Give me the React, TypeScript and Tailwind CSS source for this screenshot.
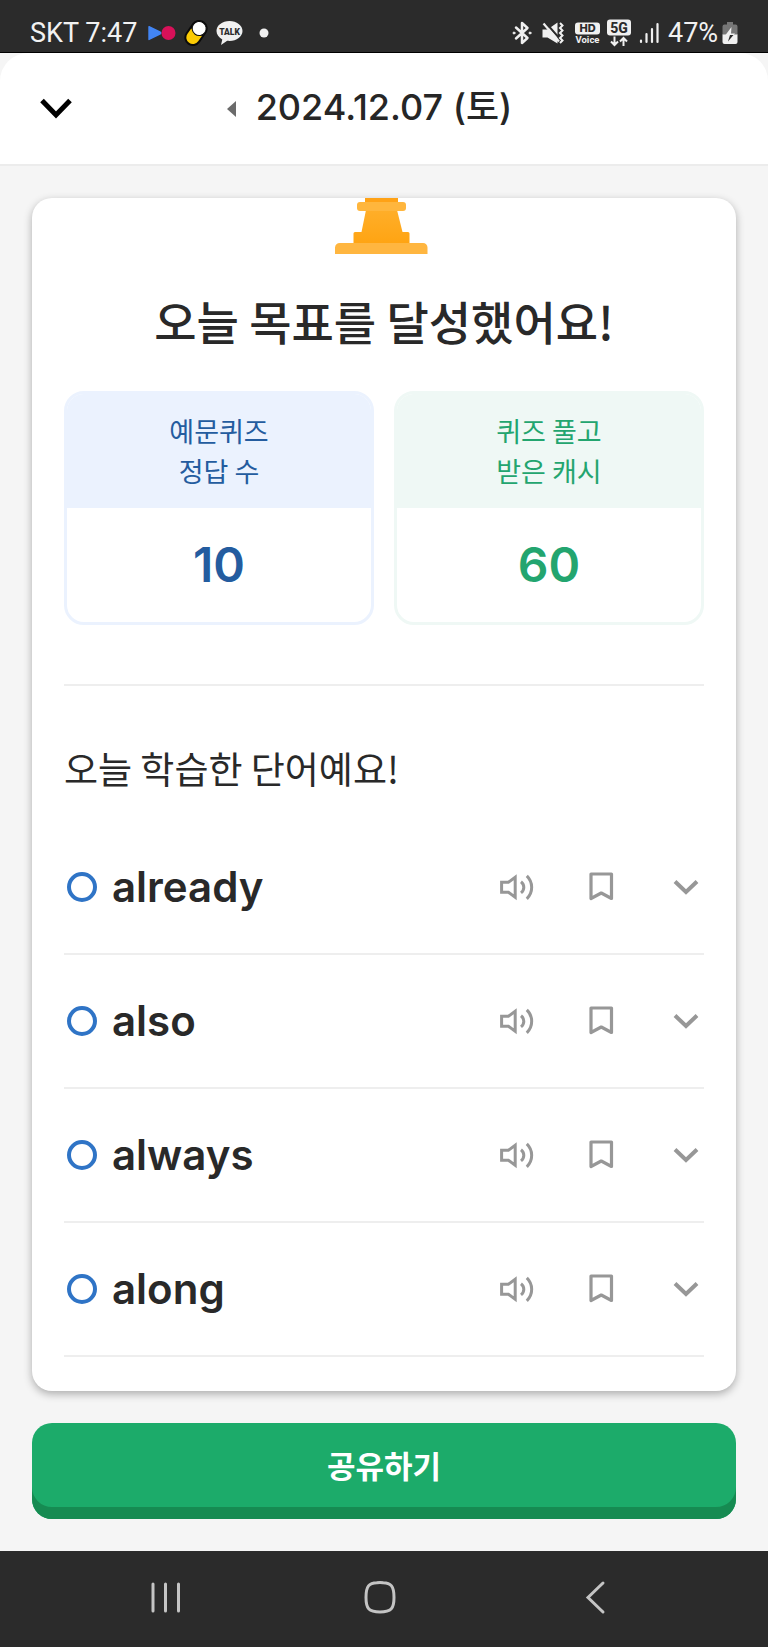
import React from "react";

const words = ["already", "also", "always", "along"];

const latin = "font-['Inter','Noto_Sans_CJK_KR',sans-serif]";
const korean = "font-['Noto_Sans_CJK_KR',sans-serif]";

function StatusBar() {
  return (
    <div className="flex h-[53px] items-center justify-between border-b border-black bg-[#2b2b2b] pt-[14px] pr-[30px] pl-[30px] font-['Roboto',sans-serif] text-[27px] leading-8 text-[#f2f2f2]">
      <div className="flex items-center">
        <span className="w-[118px] whitespace-nowrap">SKT 7:47</span>
        <svg width="28" height="16" viewBox="0 0 28 16" aria-hidden="true">
          <path d="M1 1.6 11.8 7a1 1 0 0 1 0 2L1 14.4Z" fill="#4285f4" stroke="#4285f4" strokeWidth="1.4" strokeLinejoin="round" />
          <circle cx="20.5" cy="8" r="7" fill="#d81159" />
        </svg>
        <svg className="ml-2" width="24" height="26" viewBox="0 0 24 26" aria-hidden="true">
          <g transform="rotate(35 12 13)">
            <rect x="3.500" y="-1" width="17" height="28" rx="8.500" fill="#0b0b0b" />
            <path d="M5.500 12v6.500a6.500 6.500 0 0 0 13 0V12Z" fill="#fbcb05" />
            <rect x="5" y="0.500" width="14" height="14" rx="7" fill="#ffffff" stroke="#0b0b0b" strokeWidth="1" />
          </g>
        </svg>
        <svg className="ml-2" width="27" height="26" viewBox="0 0 27 26" aria-hidden="true">
          <path d="M13.5 1C6.300 1 .5 5.400 .5 11c0 3.600 2.300 6.600 5.800 8.400L5 25l6.200-4.200c.8.100 1.500.1 2.300.1 7.200 0 13-4.400 13-9.900S20.700 1 13.500 1Z" fill="#f0f0f0" />
          <text x="13.5" y="14.500" textAnchor="middle" fontFamily="Roboto, sans-serif" fontWeight="900" fontSize="8.500" fill="#2b2b2b">TALK</text>
        </svg>
        <svg className="ml-4" width="10" height="10" viewBox="0 0 10 10" aria-hidden="true">
          <circle cx="5" cy="5" r="4.500" fill="#f0f0f0" />
        </svg>
      </div>
      <div className="flex items-center">
        <svg width="20" height="24" viewBox="0 0 20 24" fill="none" stroke="#f0f0f0" strokeWidth="2.500" strokeLinejoin="round" strokeLinecap="round" aria-hidden="true">
          <path d="M4 6.500 15.500 17 10 22V2l5.500 5L4 17.500" />
          <circle cx="2" cy="12" r="1" fill="#f0f0f0" strokeWidth="1" />
          <circle cx="18" cy="12" r="1" fill="#f0f0f0" strokeWidth="1" />
        </svg>
        <svg className="ml-[10px]" width="23" height="24" viewBox="0 0 23 24" aria-hidden="true">
          <path d="M0.500 8.500h5L15.500 1.500v21L5.500 16.500h-5Z" fill="#f0f0f0" />
          <path d="M3.500 1.500 18 18" stroke="#2b2b2b" strokeWidth="2" />
          <path d="M1.500 2.500 17 20.500" stroke="#f0f0f0" strokeWidth="2.200" />
          <path d="m18 2 2.500 2.500L18 7l2.500 2.500L18 12l2.500 2.500L18 17l2.500 2.500L18 22" fill="none" stroke="#f0f0f0" strokeWidth="2" />
        </svg>
        <svg className="ml-[10px]" width="25" height="24" viewBox="0 0 25 24" aria-hidden="true">
          <rect x="0" y="1.500" width="25" height="12" rx="3" fill="#f0f0f0" />
          <text x="12.500" y="11.300" textAnchor="middle" fontFamily="Inter, sans-serif" fontWeight="800" fontSize="11" fill="#2b2b2b">HD</text>
          <text x="12.500" y="22" textAnchor="middle" fontFamily="Roboto, sans-serif" fontWeight="700" fontSize="9.500" fill="#f0f0f0">Voice</text>
        </svg>
        <svg className="ml-[7px]" width="24" height="28" viewBox="0 0 24 28" aria-hidden="true">
          <rect x="0" y="0.500" width="24" height="16" rx="3" fill="#f0f0f0" />
          <text x="12" y="13.500" textAnchor="middle" fontFamily="Roboto, sans-serif" fontWeight="800" fontSize="14" fill="#2b2b2b">5G</text>
          <path d="M7.500 17.500v8.500m-3.500-3.500L7.500 26l3.500-3.500M16.500 27v-8m-3.500 3.500 3.500-3.500 3.500 3.500" fill="none" stroke="#f0f0f0" strokeWidth="2" />
        </svg>
        <svg className="ml-2" width="21" height="22" viewBox="0 0 21 22" fill="none" stroke="#f0f0f0" strokeLinecap="round" aria-hidden="true">
          <path d="M2 18.500V20M7.500 12v8M13 7v13M18.500 2v18" strokeWidth="2.200" />
        </svg>
        <span className="ml-2 w-[54px] whitespace-nowrap">47%</span>
        <svg width="16" height="24" viewBox="0 0 16 24" aria-hidden="true">
          <path d="M5 1h6v2.500h2.500a2 2 0 0 1 2 2V14H.5V5.500a2 2 0 0 1 2-2H5Z" fill="#777777" />
          <path d="M.5 13.500h15V21a2 2 0 0 1-2 2h-11a2 2 0 0 1-2-2Z" fill="#f0f0f0" />
          <path d="M9.500 6 3.500 14h4L6 20.500 13 12.500H9Z" fill="#f0f0f0" />
          <path d="M8 14 6 20.500 11.500 14Z" fill="#2b2b2b" />
        </svg>
      </div>
    </div>
  );
}

function Header() {
  return (
    <header className="grid h-[113px] grid-cols-[1fr_auto_1fr] items-center rounded-t-[28px] border-b-2 border-[#ececec] bg-white">
      <div className="flex items-center justify-between pr-5 pl-10">
        <button type="button" aria-label="닫기">
          <svg width="32" height="22" viewBox="0 0 32 22" fill="none" stroke="#000000" strokeWidth="5">
            <path d="M2 2.500 16 17 30 2.500" />
          </svg>
        </button>
        <button type="button" aria-label="이전 날짜">
          <svg width="9" height="16" viewBox="0 0 9 16" fill="#6b6b6b">
            <path d="M9 0v16L0 8Z" />
          </svg>
        </button>
      </div>
      <h1 className={`${latin} pb-1 text-[36px] leading-10 font-medium text-[#262626]`}>2024.12.07 (토)</h1>
      <div />
    </header>
  );
}

function Trophy() {
  return (
    <svg className="mx-auto block" width="98" height="56" viewBox="0 1 98 56" aria-hidden="true">
      <defs>
        <linearGradient id="stem" x1="0" x2="0" y1="0" y2="1">
          <stop offset="0" stopColor="#ffae29" />
          <stop offset="1" stopColor="#ffa412" />
        </linearGradient>
      </defs>
      <path d="M30 0h33v6H30Z" fill="#ffa216" />
      <path d="M31 13h31l5.500 22H73a1.500 1.500 0 0 1 1.500 1.500V47h-56V36.500A1.500 1.500 0 0 1 20 35h6.500Z" fill="url(#stem)" />
      <rect x="22" y="5" width="49" height="9" rx="3" fill="#ffb63d" />
      <path d="M5 46h83a4.500 4.500 0 0 1 4.500 4.500V57H0v-6.500A5 5 0 0 1 5 46Z" fill="#ffb640" />
    </svg>
  );
}

function StatBox({ lines, value, box, head, text }: { lines: string[]; value: string; box: string; head: string; text: string }) {
  return (
    <section className={`overflow-hidden rounded-[20px] border-[3px] ${box} ${text}`}>
      <h3 className={`${korean} ${head} pt-[17px] pb-[17px] text-center text-[27px] leading-10 font-normal`}>
        {lines.map((line) => (
          <span key={line} className="block">{line}</span>
        ))}
      </h3>
      <p className={`${latin} py-8 text-center text-[48px] leading-[50px] font-semibold`}>{value}</p>
    </section>
  );
}

function WordRow({ word }: { word: string }) {
  return (
    <li className="flex h-[134px] items-center border-b-2 border-[#eeeeee] text-[#979797]">
      <span className="ml-[3px] h-[30px] w-[30px] rounded-full border-4 border-[#2f74c6]" />
      <span className={`${latin} ml-[15px] flex-1 text-[42px] leading-[52px] font-semibold text-[#292929]`}>{word}</span>
      <div className="flex gap-12">
        <button type="button" aria-label={`${word} 발음 듣기`}>
          <svg width="36" height="36" viewBox="0 0 36 36" fill="none" stroke="currentColor" strokeWidth="3">
            <path d="M1.600 13.300h6.800l6.800-5V28.300l-6.800-5H1.600Z" />
            <path d="M21 12.700a7 7 0 0 1 0 11.200M26.800 6.800a16 16 0 0 1 0 23" />
          </svg>
        </button>
        <button type="button" aria-label={`${word} 북마크`}>
          <svg width="36" height="36" viewBox="0 0 36 36" fill="none" stroke="currentColor" strokeWidth="3.200" strokeLinejoin="round">
            <path d="M7 5h20.500v24.500L17.250 24 7 29.500Z" />
          </svg>
        </button>
        <button type="button" aria-label={`${word} 펼치기`}>
          <svg width="36" height="36" viewBox="0 0 36 36" fill="none" stroke="currentColor" strokeWidth="4">
            <path d="M7 12.500 18 23 29 12.500" />
          </svg>
        </button>
      </div>
    </li>
  );
}

function NavBar() {
  return (
    <nav className="mt-auto grid h-24 grid-cols-3 items-center justify-items-center bg-[#2b2b2b] pr-16 pb-0.5 pl-[58px]">
      <button type="button" aria-label="최근 앱">
        <svg width="36" height="36" viewBox="0 0 36 36" stroke="#c4c4c4" strokeWidth="3" strokeLinecap="round">
          <path d="M5 4v27M17.500 4v27M30.500 4v27" />
        </svg>
      </button>
      <button type="button" aria-label="홈">
        <svg width="36" height="36" viewBox="0 0 36 36" fill="none" stroke="#c4c4c4" strokeWidth="3">
          <path d="M14 2.800Q15 2.500 17 2.500T20 2.800C28 3 31 6 31 17.500S28 32 17 32 3 29 3 17.500 6 3 14 2.800Z" />
        </svg>
      </button>
      <button type="button" aria-label="뒤로">
        <svg width="36" height="36" viewBox="0 0 36 36" fill="none" stroke="#c4c4c4" strokeWidth="3" strokeLinecap="round">
          <path d="M25 3 10 17.500 25 32" />
        </svg>
      </button>
    </nav>
  );
}

export default function App() {
  return (
    <div className="flex min-h-screen flex-col bg-[#f5f5f5]">
      <StatusBar />
      <Header />
      <main className="flex flex-col gap-8 p-8">
        <div className="rounded-[20px] bg-white px-8 pb-[34px] shadow-[0_3px_8px_rgba(0,0,0,0.3)]">
          <Trophy />
          <h2 className={`${korean} mt-[34px] text-center text-[46px] leading-[64px] font-medium text-[#292929]`}>오늘 목표를 달성했어요!</h2>
          <div className="mt-[39px] grid grid-cols-2 gap-5">
            <StatBox lines={["예문퀴즈", "정답 수"]} value="10" box="border-[#ebf2fe]" head="bg-[#ebf2fe]" text="text-[#245c9f]" />
            <StatBox lines={["퀴즈 풀고", "받은 캐시"]} value="60" box="border-[#eff8f5]" head="bg-[#eff8f5]" text="text-[#23a56f]" />
          </div>
          <hr className="mt-[59px] border-t-2 border-[#eeeeee]" />
          <h2 className={`${korean} mt-[58px] text-[37px] leading-[48px] font-normal text-[#292929]`}>오늘 학습한 단어예요!</h2>
          <ul className="mt-[29px]">
            {words.map((word) => (
              <WordRow key={word} word={word} />
            ))}
          </ul>
        </div>
        <button type="button" className={`${korean} h-24 rounded-[20px] bg-[#1cab6a] pb-3 text-[31px] font-bold text-white shadow-[inset_0_-12px_0_#168b52]`}>
          공유하기
        </button>
      </main>
      <NavBar />
    </div>
  );
}
